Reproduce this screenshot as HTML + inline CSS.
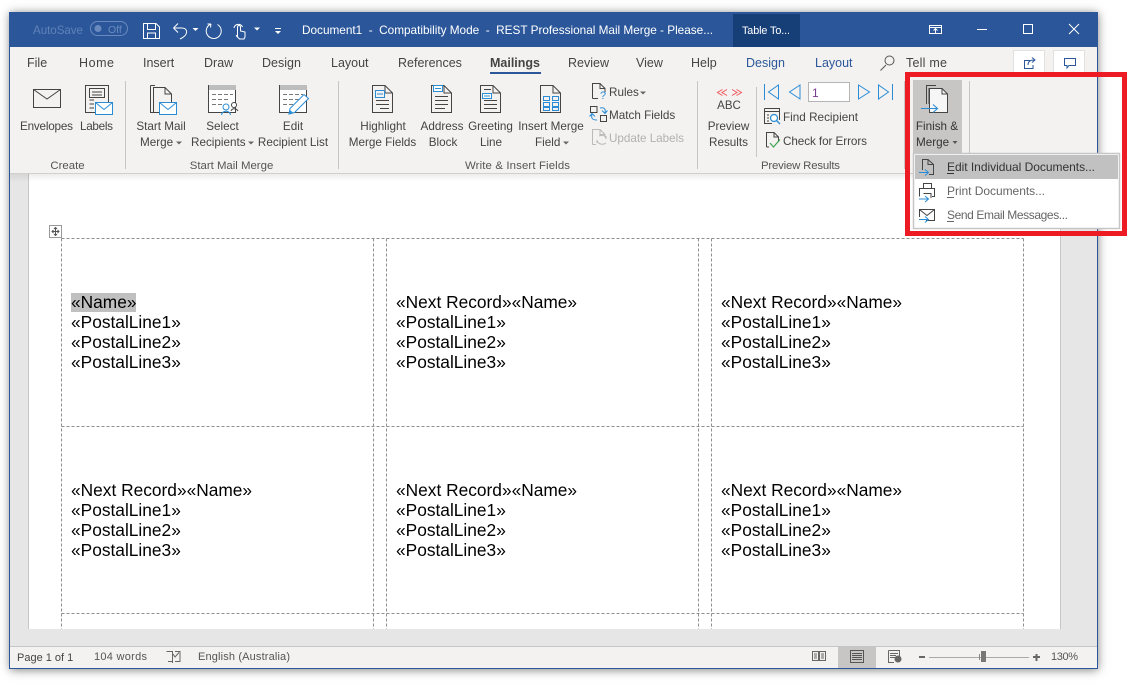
<!DOCTYPE html>
<html><head><meta charset="utf-8"><style>
html,body{margin:0;padding:0;background:#fff;width:1128px;height:686px;overflow:hidden}
#sh{position:absolute;left:10px;top:12px;width:1088px;height:657px;box-shadow:0 1px 9px rgba(0,0,0,.5)}
svg{position:absolute;left:0;top:0;font-family:"Liberation Sans",sans-serif}
text{white-space:pre}
.r{font-size:11.7px;fill:#444}
.c{text-anchor:middle}
.g{font-size:11.4px;fill:#555}
.tab{font-size:12.5px;fill:#444}
.doc{font-size:17.33px;fill:#000}
.s{font-size:11px;fill:#555}
.ln{fill:none;stroke:#444;stroke-width:1}
.bl{fill:none;stroke:#2b8cd6;stroke-width:1}
.wh{fill:none;stroke:#fff;stroke-width:1}
.d{stroke:#8f8f8f;stroke-width:1;stroke-dasharray:3 2;fill:none}
</style></head><body>
<div id="sh"></div>
<svg width="1128" height="686" viewBox="0 0 1128 686" xmlns="http://www.w3.org/2000/svg">
<defs><linearGradient id="gr" x1="0" y1="0" x2="0" y2="1"><stop offset="0" stop-color="#000" stop-opacity=".07"/><stop offset="1" stop-color="#000" stop-opacity="0"/></linearGradient></defs>
<!-- window -->
<rect x="9" y="12" width="1089" height="657" fill="#2b579a"/>
<rect x="10" y="47" width="1087" height="127" fill="#f3f2f1"/>
<rect x="10" y="173" width="1087" height="473" fill="#e6e6e6"/>
<rect x="10" y="646" width="1087" height="22" fill="#f3f2f1"/>
<rect x="10" y="646" width="1087" height="1" fill="#c6c6c6"/>
<!-- page -->
<rect x="28" y="174" width="1033" height="455" fill="#c6c6c6"/>
<rect x="29" y="174" width="1031" height="455" fill="#fff"/>
<rect x="10" y="174" width="1087" height="8" fill="url(#gr)"/>
<rect x="10" y="173" width="1087" height="1" fill="#d2d0ce"/>

<!-- title bar -->
<rect x="733" y="14" width="67" height="33" fill="#163f78"/>
<text x="33" y="34" font-size="11.6" fill="#5f82b8" textLength="50">AutoSave</text>
<rect x="90.500" y="21.500" width="37" height="14" rx="7" fill="none" stroke="#6a8abd"/>
<circle cx="98" cy="28.500" r="3.500" fill="#6a8abd"/>
<text x="108" y="33" font-size="10.500" fill="#6a8abd">Off</text>
<path class="wh" d="M143.500 23.500H156L159.500 27V38.500H143.500ZM147.500 23.500V29.500H155.500V23.500M147.500 38.500V33H155.500V38.500"/>
<path class="wh" d="M173.500 28H182C188 28 189 35 180 39M173.500 28L178 23.500M173.500 28L178 32.500" stroke-width="1.200"/>
<path d="M192.500 28h6l-3 3z" fill="#fff"/>
<path class="wh" d="M211 24A7.500 7.500 0 1 0 217.500 24.500M211 24L207.500 24M211 24L210.500 27.500" stroke-width="1.200"/>
<path class="wh" d="M234 28a4.500 4.500 0 0 1 8.500-1M237.500 36V27a1.500 1.500 0 0 1 3 0V31l4.500 1v5l-1 2h-4.500l-3.500-3.500z" stroke-width="1.200"/>
<path d="M254 27.500h6l-3 3z" fill="#fff"/>
<path d="M275 28h6v1h-6zM275 31h6l-3 3z" fill="#fff"/>
<text x="302" y="34" font-size="11.800" fill="#fff" textLength="411">Document1  -  Compatibility Mode  -  REST Professional Mail Merge - Please...</text>
<text x="742" y="34" font-size="10.800" fill="#fff" textLength="48">Table To...</text>
<path class="wh" d="M929.500 25.500H941.500V33.500H929.500ZM929.500 27.500H941.500M935.500 33V29M933.500 30.500L935.500 28.500L937.500 30.500"/>
<rect x="977" y="29" width="10" height="1" fill="#fff"/>
<rect x="1023.500" y="24.500" width="9" height="9" fill="none" stroke="#fff"/>
<path class="wh" d="M1069 24L1079 34M1079 24L1069 34"/>

<!-- tabs -->
<text class="tab" x="27" y="67">File</text>
<text class="tab" x="79" y="67" textLength="35">Home</text>
<text class="tab" x="143" y="67">Insert</text>
<text class="tab" x="204" y="67">Draw</text>
<text class="tab" x="262" y="67">Design</text>
<text class="tab" x="331" y="67">Layout</text>
<text class="tab" x="398" y="67">References</text>
<text class="tab" x="490" y="67" font-weight="bold" textLength="50">Mailings</text>
<rect x="490" y="72" width="51" height="2" fill="#2b579a"/>
<text class="tab" x="568" y="67">Review</text>
<text class="tab" x="636" y="67">View</text>
<text class="tab" x="691" y="67">Help</text>
<text class="tab" x="746" y="67" style="fill:#2b579a">Design</text>
<text class="tab" x="815" y="67" style="fill:#2b579a">Layout</text>
<path d="M880.500 70.500L886 65M894 60.500a4.500 4.500 0 1 1-9 0a4.500 4.500 0 0 1 9 0Z" fill="none" stroke="#555"/>
<text class="tab" x="906" y="67" textLength="41">Tell me</text>
<rect x="1013.500" y="50.500" width="31" height="24" fill="#fff" stroke="#e1e1e1"/>
<rect x="1053.500" y="50.500" width="31" height="24" fill="#fff" stroke="#e1e1e1"/>
<path d="M1030 60.500H1024.500V68.500H1033V65M1028 65C1028 61 1031 60 1034 60M1032 57.500L1035 60L1032 62.500" fill="none" stroke="#2b579a"/>
<path d="M1064.500 58.500H1075.500V65.500H1069L1067 68V65.500H1064.500Z" fill="none" stroke="#2b579a"/>

<!-- separators -->
<g fill="#c8c6c4">
<rect x="125" y="81" width="1" height="88"/><rect x="338" y="81" width="1" height="88"/>
<rect x="697" y="81" width="1" height="88"/><rect x="756" y="87" width="1" height="70"/>
<rect x="904" y="81" width="1" height="88"/><rect x="969" y="81" width="1" height="88"/>
</g>

<!-- Create -->
<path class="ln" d="M33.500 89.500H60.500V107.500H33.500ZM33.500 89.500L47 99L60.500 89.500"/>
<path class="ln" d="M85.500 85.500H108.500V112.500H85.500ZM89.500 88.500H104.500V97.500H89.500ZM92 92H102M92 95H102M89.500 100H94M89.500 104H94M89.500 108H94"/>
<rect x="95.500" y="102.500" width="17" height="12" fill="#fff" stroke="#2b8cd6"/>
<path class="bl" d="M95.500 102.500L104 109.500L112.500 102.500"/>
<text class="r" x="20" y="130" textLength="53">Envelopes</text>
<text class="r" x="80" y="130" textLength="33">Labels</text>
<text class="g c" x="67.500" y="169">Create</text>

<!-- Start Mail Merge -->
<path class="ln" d="M150.500 85.500H155M150.500 85.500V112.500H153M153.500 87.500H165L171.500 94V112.500H153.500ZM165 87.500V94H171.500"/>
<rect x="159.500" y="102.500" width="17" height="12" fill="#fff" stroke="#2b8cd6"/>
<path class="bl" d="M159.500 102.500L168 109.500L176.500 102.500"/>
<text class="r c" x="161" y="130">Start Mail</text>
<text class="r" x="140" y="146">Merge</text>
<path d="M176 141.500h6l-3 3z" fill="#666"/>
<rect x="208.500" y="85.500" width="27" height="27" fill="#fff" stroke="#444"/>
<rect x="209" y="85" width="27" height="5" fill="#bdbdbd"/>
<path d="M212 94.500H233M212 99.500H229M212 104.500H222" fill="none" stroke="#777" stroke-dasharray="4 2"/>
<circle cx="226" cy="107" r="3" fill="#fff" stroke="#2b8cd6"/><path class="bl" d="M221.500 115C222 110 230 110 230.500 115"/>
<circle cx="234" cy="105" r="2.500" fill="#fff" stroke="#444"/><path class="ln" d="M231 111C232 108 236 108 238 111"/>
<text class="r c" x="222.500" y="130">Select</text>
<text class="r" x="191" y="146">Recipients</text>
<path d="M248 141.500h6l-3 3z" fill="#666"/>
<rect x="279.500" y="85.500" width="27" height="27" fill="#fff" stroke="#444"/>
<rect x="280" y="85" width="27" height="5" fill="#bdbdbd"/>
<path d="M283 94.500H303M283 99.500H300M283 104.500H296" fill="none" stroke="#777" stroke-dasharray="4 2"/>
<path d="M289 114L290 108.500L304 94.500L308.500 98.500L294.500 112.500Z" fill="#fff" stroke="#2b8cd6"/>
<path d="M289 114.500L290 110L293.500 113Z" fill="#2b8cd6"/>
<text class="r c" x="293" y="130">Edit</text>
<text class="r c" x="293" y="146">Recipient List</text>
<text class="g c" x="231.500" y="169">Start Mail Merge</text>

<!-- Write & Insert Fields -->
<path class="ln" d="M372.500 85.500H385L392.500 93V112.500H372.500ZM385 85.500V93H392.500M376 100.500H389M376 104.500H389M380 108.500H389"/>
<rect x="375.500" y="90.500" width="9" height="7" fill="none" stroke="#2b8cd6"/><path class="bl" d="M377 94H383"/>
<path class="ln" d="M431.500 85.500H444L451.500 93V112.500H431.500ZM444 85.500V93H451.500M435 96.500H448M435 100.500H448M435 104.500H448M435 108.500H445"/>
<rect x="433.500" y="85.500" width="9" height="6" fill="#fff" stroke="#2b8cd6"/><path class="bl" d="M435 88.500H441"/>
<path class="ln" d="M480.500 85.500H493L500.500 93V112.500H480.500ZM493 85.500V93H500.500M484 89.500H491M484 100.500H497M484 104.500H497M484 108.500H497"/>
<rect x="482.500" y="93.500" width="9" height="5" fill="#fff" stroke="#2b8cd6"/><path class="bl" d="M484 96H490"/>
<path class="ln" d="M540.500 85.500H553L560.500 93V112.500H540.500ZM553 85.500V93H560.500"/>
<path class="bl" d="M543.500 96.500H549.500V100.500H543.500ZM552.500 96.500H558.500V100.500H552.500ZM543.500 102.500H549.500V106.500H543.500ZM552.500 102.500H558.500V106.500H552.500ZM543.500 107.500H549.500V110.500H543.500ZM552.500 107.500H558.500V110.500H552.500Z"/>
<text class="r c" x="383" y="130">Highlight</text>
<text class="r c" x="382.500" y="146">Merge Fields</text>
<text class="r c" x="442" y="130">Address</text>
<text class="r c" x="443" y="146">Block</text>
<text class="r c" x="490.500" y="130">Greeting</text>
<text class="r c" x="491" y="146">Line</text>
<text class="r c" x="551" y="130">Insert Merge</text>
<text class="r" x="535" y="146">Field</text>
<path d="M563 141.500h6l-3 3z" fill="#666"/>
<path class="ln" d="M592.500 98.500V83.500H600L605 88.500V92M600 83.500V88.500H605M592.500 98.500H598"/>
<text x="600" y="99" font-size="11" fill="#2b8cd6">?</text>
<text class="r" x="609" y="96">Rules</text>
<path d="M640 91.500h6l-3 3z" fill="#666"/>
<path class="ln" d="M590.500 106.500H597V112.500H590.500ZM600.500 115.500H606.500V121.500H600.500Z"/>
<path class="bl" d="M600 108C604 107 606 109 605 113M602 110.500L605 113.500L607.500 110.500M597 120C592 120 591 118 592 114M589.500 116.500L592 113.500L595 116.500"/>
<text class="r" x="609" y="119">Match Fields</text>
<path d="M592.500 144.500V129.500H600L605 134.500V137M600 129.500V134.500H605M592.500 144.500H596" fill="none" stroke="#b9b9b9"/>
<path d="M599 136C604 134 606 137 606 139M606 139V136M597 140C597 143 602 146 606 143M597 140V143" fill="none" stroke="#b9b9b9"/>
<text class="r" x="609" y="142" style="fill:#b1b1b1" textLength="75">Update Labels</text>
<text class="g" x="465" y="169" textLength="105">Write &amp; Insert Fields</text>

<!-- Preview Results -->
<path d="M722.500 89.500L717.500 92.500L722.500 95.500M727 89.500L722 92.500L727 95.500M732 89.500L737 92.500L732 95.500M736.500 89.500L741.500 92.500L736.500 95.500" fill="none" stroke="#f0565a" stroke-width="1"/>
<text class="r c" x="729" y="109" style="font-size:11.500px">ABC</text>
<text class="r c" x="728.500" y="130">Preview</text>
<text class="r c" x="728.500" y="146">Results</text>
<path class="bl" d="M764.500 84V100M778.500 85V99L768.500 92Z"/>
<path class="bl" d="M800 85V99L789.500 92Z"/>
<rect x="808.500" y="82.500" width="41" height="19" fill="#fff" stroke="#b5b5b5"/>
<text x="812" y="97" font-size="12" fill="#7a3b8f">1</text>
<path class="bl" d="M858.500 85V99L869.500 92Z"/>
<path class="bl" d="M878.500 85V99L888.500 92ZM892.500 84V100"/>
<path class="ln" d="M764.500 108.500H779.500V120M764.500 108.500V123.500H772M764.500 111.500H779.500M767 115H769M767 118H769M767 121H769"/>
<circle cx="774" cy="118" r="3.500" fill="#fff" stroke="#2b8cd6" stroke-width="1.200"/><path d="M776.500 120.500L780 124" stroke="#2b8cd6" stroke-width="1.300"/>
<text class="r" x="783" y="121" textLength="75">Find Recipient</text>
<path class="ln" d="M766.500 147V132.500H774L778.500 137V142M774 132.500V137H778.500M766.500 147H769"/>
<path d="M770 143L773.500 147L780 139.500" fill="none" stroke="#3fa34d" stroke-width="1.200"/>
<text class="r" x="783" y="145" textLength="84">Check for Errors</text>
<text class="g" x="761" y="169" textLength="79">Preview Results</text>

<!-- Finish & Merge button -->
<rect x="913" y="80" width="49" height="73" fill="#c8c6c4"/>
<path class="ln" d="M926.500 104V85.500H936"/>
<path d="M929.500 88.500V112.500H947.500V94L942 88.500ZM942 88.500V94H947.500" fill="#f6f6f6" stroke="#444"/>
<path class="ln" d="M929 104V88"/>
<path d="M921 108.500H937M933 104.500L937.500 108.500L933 112.500" fill="none" stroke="#2b8cd6" stroke-width="1.100"/>
<text class="r c" x="937" y="130" style="fill:#333">Finish &amp;</text>
<text class="r" x="916" y="146" style="fill:#333">Merge</text>
<path d="M952.500 141h5l-2.500 3z" fill="#555"/>

<!-- dropdown -->
<rect x="913.500" y="153.500" width="206" height="75" fill="#fff" stroke="#c6c6c6" stroke-width="1.500"/>
<rect x="915" y="155" width="203" height="24" fill="#c1c1c1"/>
<text x="947" y="171" font-size="12" fill="#333" textLength="148">Edit Individual Documents...</text>
<rect x="947" y="173" width="7" height="1" fill="#333"/>
<text x="947" y="195" font-size="12" fill="#666" textLength="98">Print Documents...</text>
<rect x="947" y="197" width="7" height="1" fill="#666"/>
<text x="947" y="219" font-size="12" fill="#666" textLength="121">Send Email Messages...</text>
<rect x="947" y="221" width="7" height="1" fill="#666"/>
<path class="ln" d="M922.500 170V159.500H928L933.500 164.500V174.500H929M928 159.500V164.500H933.500"/>
<path d="M919 172.500H928M925 169.500L928.500 172.500L925 175.500" fill="none" stroke="#2b8cd6"/>
<path class="ln" d="M923.500 188V183.500H931.500V188M919.500 196.500V188.500H934.500V196.500H932M923.500 193.500H931V198"/>
<path d="M919 199H928M925 196L928.500 199L925 202" fill="none" stroke="#2b8cd6"/>
<path class="ln" d="M919.500 217V209.500H934.500V220.500H926M919.500 209.500L927 215.500L934.500 209.500"/>
<path d="M919 219.500H928M925 216.500L928.500 219.500L925 222.500" fill="none" stroke="#2b8cd6"/>

<!-- red highlight -->
<rect x="907.500" y="74.500" width="217" height="159" fill="none" stroke="#ed1c24" stroke-width="5"/>

<!-- table -->
<g class="d">
<path d="M61.500 238.500H1023.500M61.500 426.500H1023.500M61.500 613.500H1023.500"/>
<path d="M61.500 238.500V629M373.500 238.500V629M386.500 238.500V629M698.500 238.500V629M711.500 238.500V629M1023.500 238.500V629"/>
</g>
<rect x="49.500" y="225.500" width="12" height="12" fill="#fff" stroke="#999"/>
<path d="M55.500 228V235M52 231.500H59M54 229L55.500 227.500L57 229M54 234L55.500 235.500L57 234M53.500 230L52 231.500L53.500 233M57.500 230L59 231.500L57.500 233" fill="none" stroke="#555"/>
<rect x="71" y="293" width="65" height="19" fill="#c0c0c0"/>
<g class="doc">
<text x="71" y="308">«Name»</text><text x="71" y="328">«PostalLine1»</text><text x="71" y="348">«PostalLine2»</text><text x="71" y="368">«PostalLine3»</text>
<text x="396" y="308">«Next Record»«Name»</text><text x="396" y="328">«PostalLine1»</text><text x="396" y="348">«PostalLine2»</text><text x="396" y="368">«PostalLine3»</text>
<text x="721" y="308">«Next Record»«Name»</text><text x="721" y="328">«PostalLine1»</text><text x="721" y="348">«PostalLine2»</text><text x="721" y="368">«PostalLine3»</text>
<text x="71" y="496">«Next Record»«Name»</text><text x="71" y="516">«PostalLine1»</text><text x="71" y="536">«PostalLine2»</text><text x="71" y="556">«PostalLine3»</text>
<text x="396" y="496">«Next Record»«Name»</text><text x="396" y="516">«PostalLine1»</text><text x="396" y="536">«PostalLine2»</text><text x="396" y="556">«PostalLine3»</text>
<text x="721" y="496">«Next Record»«Name»</text><text x="721" y="516">«PostalLine1»</text><text x="721" y="536">«PostalLine2»</text><text x="721" y="556">«PostalLine3»</text>
</g>

<!-- status bar -->
<text class="s" x="17" y="661" style="fill:#444">Page 1 of 1</text>
<text class="s" x="94" y="660" textLength="53">104 words</text>
<path d="M166.500 651.500H172.500V661.500H168M172.500 651.500V663M175 651.500H180V661.500H175M173 654L175 657L179 652.500" fill="none" stroke="#666"/>
<text class="s" x="198" y="660" textLength="92">English (Australia)</text>
<path d="M812.500 651.500H818.500V660.500H812.500ZM819.500 651.500H825.500V660.500H819.500ZM814 654H817M814 656H817M814 658H817M821 654H824M821 656H824M821 658H824" fill="none" stroke="#666"/>
<rect x="838" y="647" width="38" height="21" fill="#c8c6c4"/>
<path d="M850.500 650.500H863.500V662.500H850.500ZM852 653.500H862M852 655.500H862M852 657.500H862M852 659.500H862" fill="none" stroke="#555"/>
<path d="M888.500 650.500H899.500V658M888.500 650.500V662.500H894M890 653.500H898M890 655.500H896M890 657.500H895" fill="none" stroke="#666"/>
<circle cx="898" cy="659" r="3.500" fill="#666"/>
<rect x="919" y="656" width="6" height="2" fill="#666"/>
<rect x="929" y="657" width="100" height="1" fill="#aaa"/>
<rect x="979" y="654" width="1" height="6" fill="#888"/>
<rect x="981" y="651" width="5" height="11" fill="#777"/>
<path d="M1033 656h7v2h-7zM1035.500 654h2v7h-2z" fill="#666"/>
<text class="s" x="1051" y="660" textLength="27">130%</text>
</svg>
</body></html>
